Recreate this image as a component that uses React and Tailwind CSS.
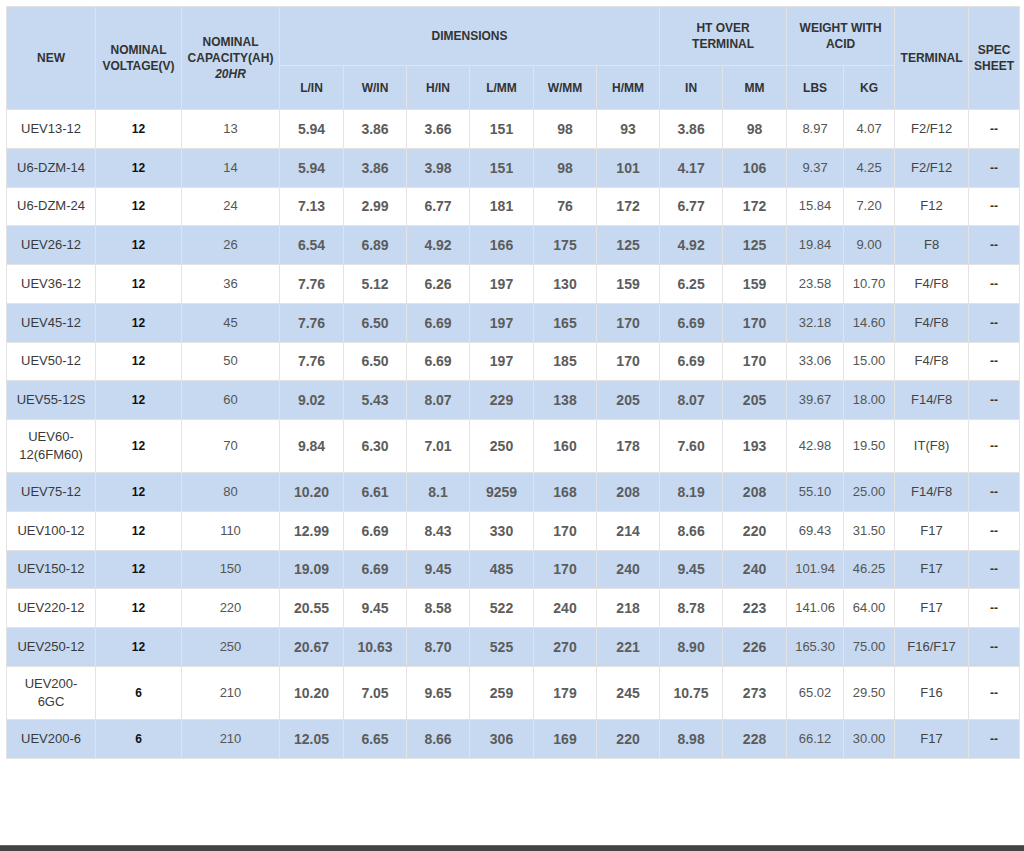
import React from "react";

const rows = [
  ["UEV13-12", "12", "13", "5.94", "3.86", "3.66", "151", "98", "93", "3.86", "98", "8.97", "4.07", "F2/F12"],
  ["U6-DZM-14", "12", "14", "5.94", "3.86", "3.98", "151", "98", "101", "4.17", "106", "9.37", "4.25", "F2/F12"],
  ["U6-DZM-24", "12", "24", "7.13", "2.99", "6.77", "181", "76", "172", "6.77", "172", "15.84", "7.20", "F12"],
  ["UEV26-12", "12", "26", "6.54", "6.89", "4.92", "166", "175", "125", "4.92", "125", "19.84", "9.00", "F8"],
  ["UEV36-12", "12", "36", "7.76", "5.12", "6.26", "197", "130", "159", "6.25", "159", "23.58", "10.70", "F4/F8"],
  ["UEV45-12", "12", "45", "7.76", "6.50", "6.69", "197", "165", "170", "6.69", "170", "32.18", "14.60", "F4/F8"],
  ["UEV50-12", "12", "50", "7.76", "6.50", "6.69", "197", "185", "170", "6.69", "170", "33.06", "15.00", "F4/F8"],
  ["UEV55-12S", "12", "60", "9.02", "5.43", "8.07", "229", "138", "205", "8.07", "205", "39.67", "18.00", "F14/F8"],
  [["UEV60-", "12(6FM60)"], "12", "70", "9.84", "6.30", "7.01", "250", "160", "178", "7.60", "193", "42.98", "19.50", "IT(F8)"],
  ["UEV75-12", "12", "80", "10.20", "6.61", "8.1", "9259", "168", "208", "8.19", "208", "55.10", "25.00", "F14/F8"],
  ["UEV100-12", "12", "110", "12.99", "6.69", "8.43", "330", "170", "214", "8.66", "220", "69.43", "31.50", "F17"],
  ["UEV150-12", "12", "150", "19.09", "6.69", "9.45", "485", "170", "240", "9.45", "240", "101.94", "46.25", "F17"],
  ["UEV220-12", "12", "220", "20.55", "9.45", "8.58", "522", "240", "218", "8.78", "223", "141.06", "64.00", "F17"],
  ["UEV250-12", "12", "250", "20.67", "10.63", "8.70", "525", "270", "221", "8.90", "226", "165.30", "75.00", "F16/F17"],
  [["UEV200-", "6GC"], "6", "210", "10.20", "7.05", "9.65", "259", "179", "245", "10.75", "273", "65.02", "29.50", "F16"],
  ["UEV200-6", "6", "210", "12.05", "6.65", "8.66", "306", "169", "220", "8.98", "228", "66.12", "30.00", "F17"],
];

const widths = [89, 86, 98, 64, 63, 63, 64, 63, 63, 63, 64, 57, 51, 74, 51];

const th = "border border-[#e3e3e3] bg-[#c6d9f1] text-[12px] font-bold text-[#333] leading-[16px] text-center align-middle";
const td = "border border-[#e3e3e3] text-center align-middle px-[4px] py-[8px] leading-[18px]";

export default function App() {
  return (
    <div className="w-[1024px] h-[851px] flex flex-col bg-white" style={{ fontFamily: '"Liberation Sans", Arial, sans-serif' }}>
      <div className="flex-1 pt-[6px] pl-[6px]">
        <table className="border-collapse table-fixed w-[1013px]">
          <colgroup>
            {widths.map((w, i) => (
              <col key={i} style={{ width: w }} />
            ))}
          </colgroup>
          <thead>
            <tr className="h-[59px]">
              <th rowSpan={2} className={th}>NEW</th>
              <th rowSpan={2} className={th}>NOMINAL<br />VOLTAGE(V)</th>
              <th rowSpan={2} className={th}>
                NOMINAL<br />CAPACITY(AH)<br /><i>20HR</i>
              </th>
              <th colSpan={6} className={th}>DIMENSIONS</th>
              <th colSpan={2} className={th}>HT OVER<br />TERMINAL</th>
              <th colSpan={2} className={th}>WEIGHT WITH<br />ACID</th>
              <th rowSpan={2} className={th}>TERMINAL</th>
              <th rowSpan={2} className={th}>SPEC<br />SHEET</th>
            </tr>
            <tr className="h-[44px]">
              {["L/IN", "W/IN", "H/IN", "L/MM", "W/MM", "H/MM", "IN", "MM", "LBS", "KG"].map((h) => (
                <th key={h} className={th}>{h}</th>
              ))}
            </tr>
          </thead>
          <tbody>
            {rows.map((r, i) => (
              <tr key={i} className={`h-[38.75px] ${i % 2 === 1 ? "bg-[#c6d9f1]" : "bg-white"}`}>
                <td className={`${td} text-[13px] text-[#3a3a3a]`}>
                  {Array.isArray(r[0]) ? (
                    <>
                      {r[0][0]}
                      <br />
                      {r[0][1]}
                    </>
                  ) : (
                    r[0]
                  )}
                </td>
                <td className={`${td} text-[12px] font-bold text-[#111]`}>{r[1]}</td>
                <td className={`${td} text-[13px] text-[#555]`}>{r[2]}</td>
                {r.slice(3, 11).map((v, j) => (
                  <td key={j} className={`${td} text-[14px] font-bold text-[#5c5c5c]`}>{v}</td>
                ))}
                <td className={`${td} text-[13px] text-[#555]`}>{r[11]}</td>
                <td className={`${td} text-[13px] text-[#555]`}>{r[12]}</td>
                <td className={`${td} text-[13px] text-[#444]`}>{r[13]}</td>
                <td className={`${td} text-[12px] font-bold text-[#333]`}>--</td>
              </tr>
            ))}
          </tbody>
        </table>
      </div>
      <div className="h-[6px] bg-[#444] border-t border-[#666]" />
    </div>
  );
}
